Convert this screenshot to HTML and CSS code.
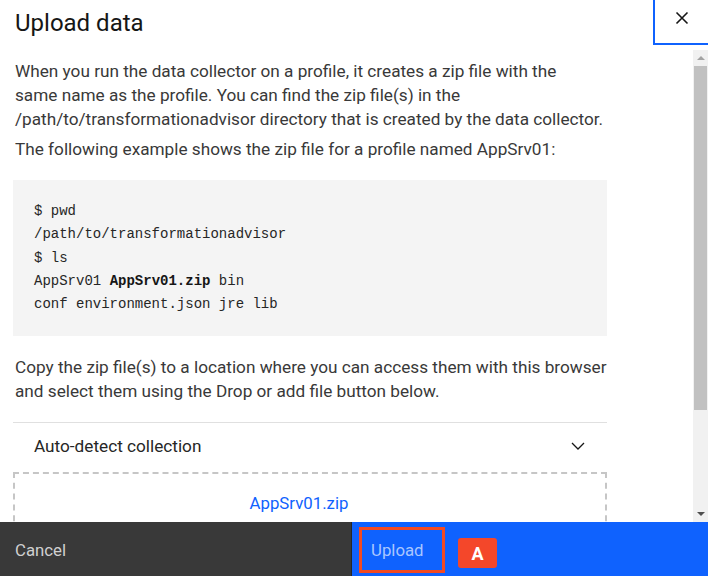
FILE: index.html
```html
<!DOCTYPE html>
<html>
<head>
<meta charset="utf-8">
<link rel="stylesheet" href="styles.css">
</head>
<body>
<div class="modal">
  <div class="header">
    <h2 class="title">Upload data</h2>
    <div class="close">
      <svg width="16" height="16" viewBox="0 0 16 16"><path d="M2.5 2.5 L13.5 13.5 M13.5 2.5 L2.5 13.5" stroke="#161616" stroke-width="1.6" fill="none"/></svg>
    </div>
  </div>
  <div class="body">
    <div class="content">
      <p class="text">When you run the data collector on a profile, it creates a zip file with the<br>same name as the profile. You can find the zip file(s) in the<br>/path/to/transformationadvisor directory that is created by the data collector.</p>
      <p class="text second">The following example shows the zip file for a profile named AppSrv01:</p>
      <pre class="code"><span class="line">$ pwd</span>
<span class="line">/path/to/transformationadvisor</span>
<span class="line">$ ls</span>
<span class="line">AppSrv01 <b>AppSrv01.zip</b> bin</span>
<span class="line">conf environment.json jre lib</span></pre>
      <p class="text copy">Copy the zip file(s) to a location where you can access them with this browser<br>and select them using the Drop or add file button below.</p>
      <div class="dropdown">
        <span>Auto-detect collection</span>
        <svg width="14" height="8" viewBox="0 0 14 8"><path d="M1 1 L7 7 L13 1" stroke="#161616" stroke-width="1.3" fill="none"/></svg>
      </div>
      <div class="dropzone"><span class="file">AppSrv01.zip</span></div>
    </div>
    <div class="scrollbar">
      <div class="arrow up"></div>
      <div class="track"><div class="thumb"></div></div>
      <div class="arrow down"></div>
    </div>
  </div>
  <div class="footer">
    <div class="btn cancel">Cancel</div>
    <div class="btn primary">
      <div class="hl">Upload</div>
      <div class="badge">A</div>
    </div>
  </div>
</div>
</body>
</html>
```
FILE: styles.css
```css
* { box-sizing: border-box; }
html, body { margin: 0; padding: 0; }
body {
  width: 708px;
  height: 576px;
  overflow: hidden;
  background: #ffffff;
  font-family: Roboto, "Noto Sans", sans-serif;
  color: #393939;
}
.modal {
  width: 708px;
  height: 576px;
  display: flex;
  flex-direction: column;
}
.header {
  display: flex;
  justify-content: space-between;
  align-items: flex-start;
  height: 50px;
}
.title {
  margin: 0;
  padding: 8px 0 0 15px;
  font-size: 24px;
  font-weight: 400;
  color: #161616;
  line-height: 31px;
}
.close {
  width: 55px;
  height: 45px;
  border-left: 2px solid #0f62fe;
  border-bottom: 2px solid #0f62fe;
  display: flex;
  align-items: center;
  justify-content: center;
  padding-bottom: 8px;
}
.body {
  flex: 1;
  display: flex;
  overflow: hidden;
}
.content {
  flex: 1;
  padding: 9px 0 0 13px;
  overflow: hidden;
}
.content > * { width: 594px; }
.content > .text { width: 630px; }
.text {
  margin: 0;
  padding-left: 2px;
  font-size: 17.2px;
  line-height: 24px;
}
.second { margin-top: 6px; }
.code {
  margin: 19px 0 0 0;
  background: #f4f4f4;
  padding: 20px 21px 0 21px;
  font-family: "Liberation Mono", monospace;
  font-size: 14px;
  line-height: 23.3px;
  color: #262626;
  height: 156px;
}
.code b { font-weight: 700; color: #161616; }
.copy { margin-top: 19px; }
.dropdown {
  margin-top: 19px;
  border-top: 1px solid #e0e0e0;
  height: 50px;
  display: flex;
  align-items: center;
  justify-content: space-between;
  padding: 0 22px 3px 21px;
  font-size: 17.2px;
  color: #262626;
}
.dropzone {
  border: 2px dashed #c6c6c6;
  border-bottom: none;
  height: 60px;
  display: flex;
  justify-content: center;
  padding: 17px 22px 0 0;
}
.file { color: #0f62fe; font-size: 16.8px; line-height: 24px; }
.scrollbar {
  width: 15px;
  background: #f1f1f1;
  display: flex;
  flex-direction: column;
}
.arrow { height: 16px; display: flex; align-items: center; justify-content: center; }
.arrow.up::before {
  content: "";
  border-left: 4px solid transparent;
  border-right: 4px solid transparent;
  border-bottom: 4px solid #a3a3a3;
}
.arrow.down::before {
  content: "";
  border-left: 4px solid transparent;
  border-right: 4px solid transparent;
  border-top: 4px solid #505050;
}
.track { flex: 1; padding: 0 1px; }
.thumb { height: 344px; background: #c1c1c1; }
.footer {
  height: 54px;
  display: flex;
  flex-shrink: 0;
}
.btn { font-size: 16.8px; }
.cancel {
  width: 352px;
  background: #393939;
  color: #d0d0d0;
  padding: 16px 0 0 15px;
  line-height: 24px;
  border-right: 1px solid #262626;
}
.primary {
  flex: 1;
  background: #0f62fe;
  display: flex;
  align-items: flex-start;
  padding: 5px 0 0 7px;
}
.hl {
  width: 86px;
  height: 46px;
  border: 3px solid #f24a22;
  color: #a9c6ff;
  padding: 8px 0 0 9px;
  line-height: 24px;
}
.badge {
  margin: 11px 0 0 13px;
  width: 39px;
  height: 30px;
  background: #f4472a;
  border-radius: 3px;
  color: #ffffff;
  font-weight: 700;
  font-size: 18px;
  display: flex;
  align-items: center;
  justify-content: center;
}
```
